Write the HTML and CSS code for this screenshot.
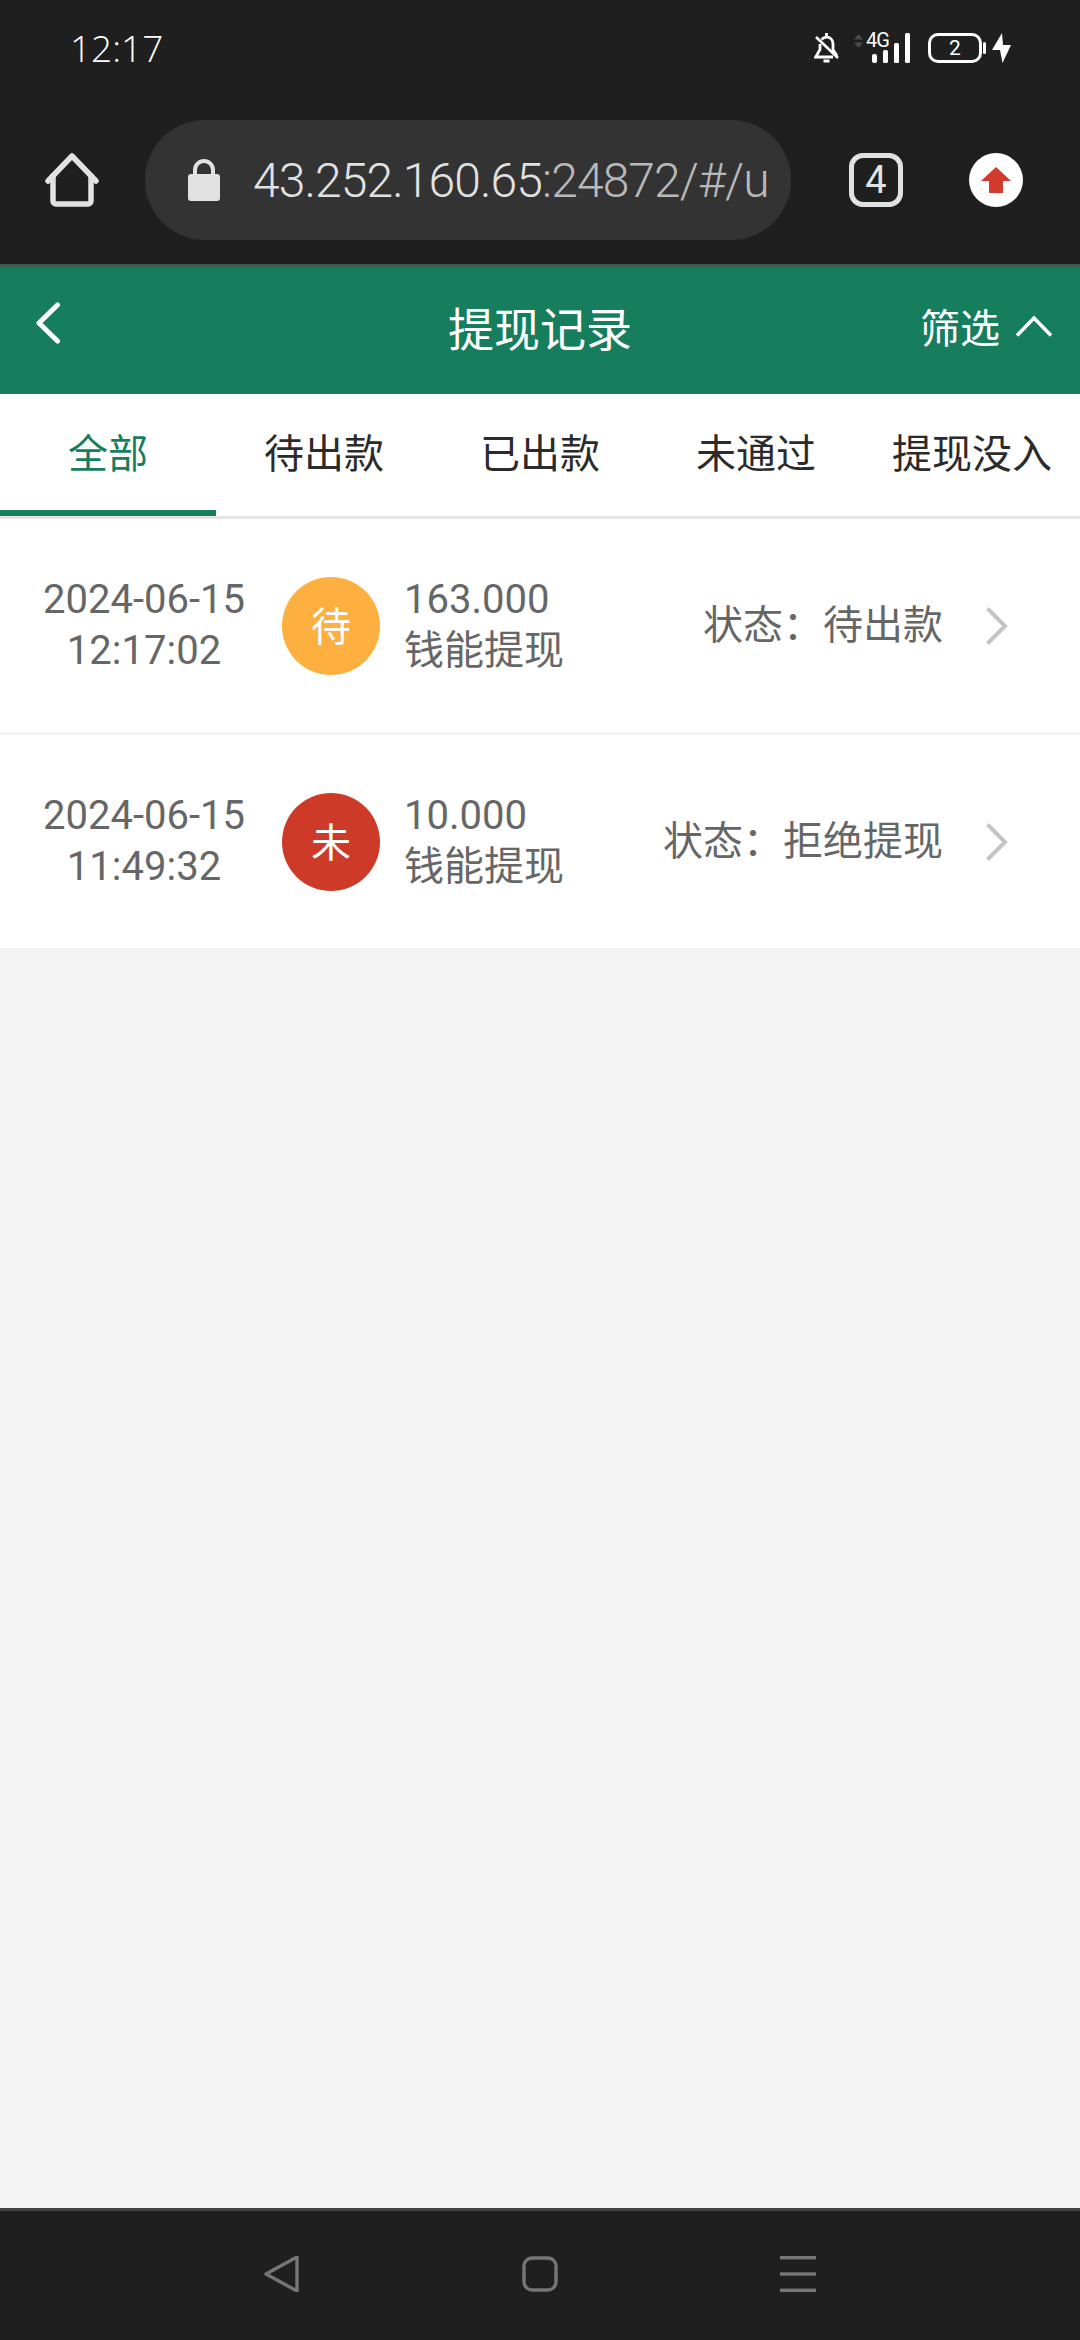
FILE: index.html
```html
<!DOCTYPE html>
<html lang="zh">
<head>
	<meta charset="UTF-8">
	<title>提现记录</title>
	<link rel="stylesheet" href="styles.css">
</head>
<body>
	<div class="statusbar">
		<span class="clock">12:17</span>
		<div class="status-icons">
			<svg class="ic-bell" width="25" height="30" viewBox="0 0 25 30" fill="none" stroke="#fff" stroke-width="2.8"><path d="M12.5 0v4M7.5 6.5C9 5 10.500 4.200 12.500 4.200c4 0 6.500 3 6.500 7v5.500l4 6M6 11v5.500L1.700 24H19"/><path d="M2 4l22 21" stroke-width="2.600"/><path d="M9.500 28h6" stroke-width="3"/></svg>
			<div class="net">
				<svg class="ic-updown" width="9" height="14" viewBox="0 0 9 14" fill="#4a4a4a"><path d="M4.500 0l4.500 5.500H0zM4.500 14L0 8.500h9z"/></svg>
				<span class="net-label">4G</span>
				<svg class="ic-signal" width="38" height="30" viewBox="0 0 38 30" fill="#fff"><rect x="0" y="21" width="5" height="9" rx="2"/><rect x="11" y="17" width="5" height="13" rx="1.500"/><rect x="22" y="10" width="5" height="20" rx="1.500"/><rect x="33" y="0" width="5" height="30" rx="1.500"/></svg>
			</div>
			<div class="battery"><span>2</span></div>
			<i class="battery-tip"></i>
			<svg class="ic-bolt" width="19" height="30" viewBox="0 0 19 30" fill="#fff"><path d="M10 0L0 17h8l2.500 13L19 12h-8z"/></svg>
		</div>
	</div>

	<div class="browserbar">
		<svg class="ic-home" width="54" height="54" viewBox="0 0 54 54" fill="none" stroke="#e2e2e2" stroke-width="5.500" stroke-linejoin="round" stroke-linecap="round"><path d="M3 28L27 3l24 25"/><path d="M8 23v25a3 3 0 0 0 3 3h32a3 3 0 0 0 3-3V23"/></svg>
		<div class="urlbox">
			<svg class="ic-lock" width="32" height="42" viewBox="0 0 32 42"><path d="M7 18v-7a9 9 0 0 1 18 0v7" fill="none" stroke="#e2e2e2" stroke-width="4"/><rect x="0" y="15" width="32" height="27" rx="3" fill="#e2e2e2"/></svg>
			<div class="url"><span class="host">43.252.160.65</span>:24872/#/u</div>
		</div>
		<div class="tabcount">4</div>
		<div class="update">
			<svg width="30" height="26" viewBox="0 0 30 26" fill="#d13a2c"><path d="M15 0l15 14h-8v12H8V14H0z"/></svg>
		</div>
	</div>

	<div class="header">
		<svg class="ic-back" width="24" height="42" viewBox="0 0 24 42" fill="none" stroke="#fff" stroke-width="5" stroke-linecap="round" stroke-linejoin="round"><path d="M21.500 3L3 21l18.500 18"/></svg>
		<h1>提现记录</h1>
		<div class="filter">
			<span>筛选</span>
			<svg width="36" height="22" viewBox="0 0 36 22" fill="none" stroke="#fff" stroke-width="3.600"><path d="M1 20.500L18 3l17 17.500"/></svg>
		</div>
	</div>

	<div class="tabs">
		<div class="tab active">全部</div>
		<div class="tab">待出款</div>
		<div class="tab">已出款</div>
		<div class="tab">未通过</div>
		<div class="tab">提现没入</div>
	</div>

	<div class="list">
		<div class="row">
			<div class="date">2024-06-15<br>12:17:02</div>
			<div class="badge wait">待</div>
			<div class="info">163.000<br>钱能提现</div>
			<div class="state">状态：待出款</div>
			<svg class="ic-more" width="22" height="38" viewBox="0 0 22 38" fill="none" stroke="#c4c4c4" stroke-width="4"><path d="M1.500 1.500L19 19 1.500 36.500"/></svg>
		</div>
		<div class="row">
			<div class="date">2024-06-15<br>11:49:32</div>
			<div class="badge fail">未</div>
			<div class="info">10.000<br>钱能提现</div>
			<div class="state">状态：拒绝提现</div>
			<svg class="ic-more" width="22" height="38" viewBox="0 0 22 38" fill="none" stroke="#c4c4c4" stroke-width="4"><path d="M1.500 1.500L19 19 1.500 36.500"/></svg>
		</div>
	</div>

	<div class="empty"></div>

	<div class="navbar">
		<svg width="36" height="36" viewBox="0 0 36 36" fill="none" stroke="#767676" stroke-width="3.400" stroke-linejoin="round"><path d="M2 18L33 1v34z"/></svg>
		<svg width="36" height="36" viewBox="0 0 36 36" fill="none" stroke="#767676" stroke-width="3.400"><rect x="2" y="2" width="32" height="32" rx="8"/></svg>
		<svg width="36" height="36" viewBox="0 0 36 36" fill="#767676"><rect x="0" y="0" width="36" height="3.400"/><rect x="0" y="16.300" width="36" height="3.400"/><rect x="0" y="32.600" width="36" height="3.400"/></svg>
	</div>
</body>
</html>
```

FILE: styles.css
```css
*{
	margin:0;
	padding:0;
	box-sizing:border-box;
}
body{
	width:1080px;
	height:2340px;
	display:flex;
	flex-direction:column;
	background:#f4f4f4;
	font-family:"Roboto","Noto Sans CJK SC",sans-serif;
}
.statusbar{
	height:90px;
	flex:none;
	padding:4px 69px 0 70px;
	display:flex;
	align-items:center;
	justify-content:space-between;
	background:#1f1f1f;
	color:#fff;
}
.clock{
	font-family:"Open Sans","Noto Sans",sans-serif;
	font-size:37px;
	font-weight:300;
}
.status-icons{
	display:flex;
	align-items:center;
	margin-top:2px;
}
.ic-bell{
	margin-right:15px;
}
.net{
	position:relative;
	width:56px;
	height:30px;
	margin-right:18px;
	display:flex;
	justify-content:flex-end;
}
.ic-updown{
	position:absolute;
	left:0;
	top:1px;
}
.net-label{
	position:absolute;
	left:12px;
	top:-1px;
	font-size:20px;
	line-height:17px;
	letter-spacing:-1px;
}
.battery{
	width:54px;
	height:30px;
	border:3px solid #fff;
	border-radius:10px;
	display:flex;
	align-items:center;
	justify-content:center;
	font-size:21px;
}
.battery-tip{
	width:3px;
	height:12px;
	margin:0 6px 0 1px;
	background:#fff;
	border-radius:2px;
}
.browserbar{
	height:177px;
	flex:none;
	padding:6px 0 0 45px;
	display:flex;
	align-items:center;
	background:#1f1f1f;
	border-bottom:3px solid #3c5a50;
}
.ic-home{
	flex:none;
	margin-right:46px;
}
.urlbox{
	width:646px;
	height:120px;
	margin-right:58px;
	padding-left:43px;
	display:flex;
	align-items:center;
	background:#333;
	border-radius:60px;
}
.ic-lock{
	flex:none;
	margin-right:33px;
}
.url{
	font-size:48px;
	font-weight:300;
	letter-spacing:-0.900px;
	color:#b9b9b9;
	white-space:nowrap;
}
.host{
	color:#e2e2e2;
}
.tabcount{
	width:54px;
	height:54px;
	margin-right:66px;
	border:5px solid #e2e2e2;
	border-radius:14px;
	display:flex;
	align-items:center;
	justify-content:center;
	color:#e2e2e2;
	font-size:38px;
}
.update{
	width:54px;
	height:54px;
	background:#fff;
	border-radius:50%;
	display:flex;
	align-items:center;
	justify-content:center;
}
.header{
	height:127px;
	flex:none;
	padding-bottom:10px;
	position:relative;
	display:flex;
	align-items:center;
	justify-content:center;
	background:#167e5d;
	color:#fff;
}
.header h1{
	font-size:46px;
	font-weight:400;
}
.ic-back{
	position:absolute;
	left:36px;
	top:35px;
}
.filter{
	position:absolute;
	right:28px;
	top:0;
	height:118px;
	display:flex;
	align-items:center;
	gap:16px;
	font-size:40px;
}
.tabs{
	height:125px;
	flex:none;
	display:flex;
	background:#fff;
	border-bottom:3px solid #e4e4e4;
}
.tab{
	width:216px;
	height:122px;
	display:flex;
	justify-content:center;
	line-height:122px;
	font-size:40px;
	color:#2b2b2b;
	white-space:nowrap;
}
.tab.active{
	color:#167e5d;
	border-bottom:6px solid #167e5d;
}
.list{
	flex:none;
}
.row{
	height:213px;
	padding:0 72px 0 42px;
	display:flex;
	align-items:center;
	background:#fff;
	color:#666;
	font-size:40px;
	line-height:51px;
}
.row + .row{
	margin-top:3px;
}
.date{
	width:204px;
	margin-right:36px;
	margin-top:-2px;
	text-align:center;
	white-space:nowrap;
}
.badge{
	width:98px;
	height:98px;
	flex:none;
	margin-right:24px;
	padding-top:4px;
	border-radius:50%;
	display:flex;
	align-items:center;
	justify-content:center;
	color:#fff;
	font-size:40px;
}
.badge.wait{
	background:#fdb040;
}
.badge.fail{
	background:#cd3b28;
}
.info{
	margin-top:-2px;
	white-space:nowrap;
}
.state{
	margin-left:auto;
	margin-right:43px;
	white-space:nowrap;
}
.ic-more{
	flex:none;
}
.empty{
	flex:1;
}
.navbar{
	height:132px;
	flex:none;
	padding:0 264px 3px;
	display:flex;
	align-items:center;
	justify-content:space-between;
	background:#1f1f1f;
	border-top:3px solid #444;
}
```
